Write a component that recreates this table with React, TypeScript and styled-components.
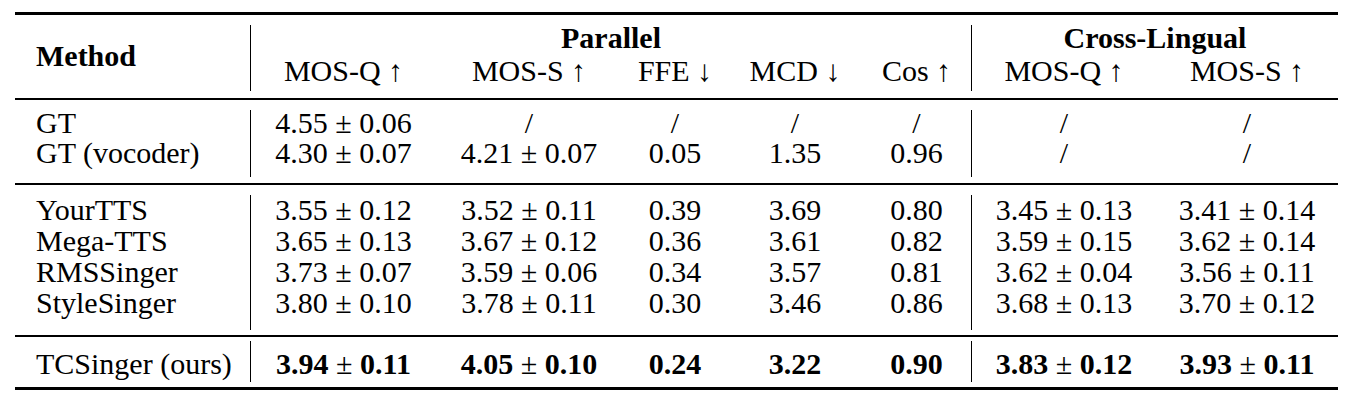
import { Fragment } from 'react'
import styled, { createGlobalStyle } from 'styled-components'

type Metric = string | { mean: string; std: string }

type ResultRow = {
  method: string
  parallel: Metric[]
  crossLingual: Metric[]
  best?: boolean
}

const columns = '235px 1px 185px 186px 106px 134px 109px 1px 184px 182px'

const GlobalStyle = createGlobalStyle`
  html, body {
    margin: 0;
    background: #ffffff;
  }
  body {
    font-family: 'Liberation Serif', 'Times New Roman', serif;
    color: #000000;
  }
`

const Page = styled.div`
  padding: 12px 0 0 15px;
`

const Table = styled.div`
  display: flex;
  flex-direction: column;
  width: 1323px;
`

const Rule = styled.div<{ $weight: number }>`
  height: ${(p) => p.$weight}px;
  background: #000000;
`

const Section = styled.div<{ $top: number; $bottom: number; $row: number; $gap?: number }>`
  display: grid;
  grid-template-columns: ${columns};
  grid-auto-rows: ${(p) => p.$row}px;
  row-gap: ${(p) => p.$gap ?? 0}px;
  padding: ${(p) => p.$top}px 0 ${(p) => p.$bottom}px;
  font-size: 30px;
  line-height: ${(p) => p.$row}px;
`

const Cell = styled.div<{ $bold?: boolean }>`
  white-space: nowrap;
  text-align: center;
  font-weight: ${(p) => (p.$bold ? 700 : 400)};
`

const MethodCell = styled(Cell)`
  text-align: left;
  padding-left: 21px;
`

const MethodHeader = styled(MethodCell)`
  grid-column: 1;
  grid-row: 1 / span 2;
  align-self: center;
  padding-top: 2px;
  font-weight: 700;
`

const GroupHeader = styled(Cell)<{ $from: number; $to: number }>`
  grid-column: ${(p) => p.$from} / ${(p) => p.$to};
  grid-row: 1;
  font-weight: 700;
`

const ColumnHeader = styled(Cell)<{ $col: number }>`
  grid-column: ${(p) => p.$col};
  grid-row: 2;
`

// vertical rule between column groups; stops short of the horizontal rules
const VRule = styled.div<{ $col: number; $rows: number; $inset: [number, number] }>`
  grid-column: ${(p) => p.$col};
  grid-row: 1 / span ${(p) => p.$rows};
  margin: ${(p) => p.$inset[0]}px 0 ${(p) => p.$inset[1]}px;
  background: #000000;
`

const Strong = styled.span`
  font-weight: 700;
`

const parallelHeads = ['MOS-Q ↑', 'MOS-S ↑', 'FFE ↓', 'MCD ↓', 'Cos ↑']
const crossHeads = ['MOS-Q ↑', 'MOS-S ↑']

const reference: ResultRow[] = [
  { method: 'GT', parallel: [{ mean: '4.55', std: '0.06' }, '/', '/', '/', '/'], crossLingual: ['/', '/'] },
  {
    method: 'GT (vocoder)',
    parallel: [{ mean: '4.30', std: '0.07' }, { mean: '4.21', std: '0.07' }, '0.05', '1.35', '0.96'],
    crossLingual: ['/', '/'],
  },
]

const baselines: ResultRow[] = [
  {
    method: 'YourTTS',
    parallel: [{ mean: '3.55', std: '0.12' }, { mean: '3.52', std: '0.11' }, '0.39', '3.69', '0.80'],
    crossLingual: [{ mean: '3.45', std: '0.13' }, { mean: '3.41', std: '0.14' }],
  },
  {
    method: 'Mega-TTS',
    parallel: [{ mean: '3.65', std: '0.13' }, { mean: '3.67', std: '0.12' }, '0.36', '3.61', '0.82'],
    crossLingual: [{ mean: '3.59', std: '0.15' }, { mean: '3.62', std: '0.14' }],
  },
  {
    method: 'RMSSinger',
    parallel: [{ mean: '3.73', std: '0.07' }, { mean: '3.59', std: '0.06' }, '0.34', '3.57', '0.81'],
    crossLingual: [{ mean: '3.62', std: '0.04' }, { mean: '3.56', std: '0.11' }],
  },
  {
    method: 'StyleSinger',
    parallel: [{ mean: '3.80', std: '0.10' }, { mean: '3.78', std: '0.11' }, '0.30', '3.46', '0.86'],
    crossLingual: [{ mean: '3.68', std: '0.13' }, { mean: '3.70', std: '0.12' }],
  },
]

const ours: ResultRow[] = [
  {
    method: 'TCSinger (ours)',
    parallel: [{ mean: '3.94', std: '0.11' }, { mean: '4.05', std: '0.10' }, '0.24', '3.22', '0.90'],
    crossLingual: [{ mean: '3.83', std: '0.12' }, { mean: '3.93', std: '0.11' }],
    best: true,
  },
]

const MetricValue = ({ value, best }: { value: Metric; best?: boolean }) => {
  if (typeof value === 'string') {
    return <Cell $bold={best && value !== '/'}>{value}</Cell>
  }
  if (best) {
    return (
      <Cell>
        <Strong>{value.mean}</Strong> ± <Strong>{value.std}</Strong>
      </Cell>
    )
  }
  return (
    <Cell>
      {value.mean} ± {value.std}
    </Cell>
  )
}

type BodyProps = {
  rows: ResultRow[]
  top: number
  bottom: number
  row: number
  inset: [number, number]
}

const Body = ({ rows, top, bottom, row, inset }: BodyProps) => (
  <Section $top={top} $bottom={bottom} $row={row}>
    <VRule $col={2} $rows={rows.length} $inset={inset} />
    <VRule $col={8} $rows={rows.length} $inset={inset} />
    {rows.map((r) => (
      <Fragment key={r.method}>
        <MethodCell>{r.method}</MethodCell>
        {r.parallel.map((v, i) => (
          <MetricValue key={`p${i}`} value={v} best={r.best} />
        ))}
        {r.crossLingual.map((v, i) => (
          <MetricValue key={`c${i}`} value={v} best={r.best} />
        ))}
      </Fragment>
    ))}
  </Section>
)

export default function App() {
  return (
    <Page>
      <GlobalStyle />
      <Table>
        <Rule $weight={3} />
        <Section $top={7} $bottom={12} $row={31} $gap={2}>
          <MethodHeader>Method</MethodHeader>
          <VRule $col={2} $rows={2} $inset={[3, -5]} />
          <GroupHeader $from={3} $to={8}>
            Parallel
          </GroupHeader>
          {parallelHeads.map((h, i) => (
            <ColumnHeader key={h} $col={3 + i}>
              {h}
            </ColumnHeader>
          ))}
          <VRule $col={8} $rows={2} $inset={[3, -5]} />
          <GroupHeader $from={9} $to={11}>
            Cross-Lingual
          </GroupHeader>
          {crossHeads.map((h, i) => (
            <ColumnHeader key={`x${h}`} $col={9 + i}>
              {h}
            </ColumnHeader>
          ))}
        </Section>
        <Rule $weight={2} />
        <Body rows={reference} top={8} bottom={15} row={30} inset={[2, -9]} />
        <Rule $weight={2} />
        <Body rows={baselines} top={9} bottom={17} row={31} inset={[1, -12]} />
        <Rule $weight={2} />
        <Body rows={ours} top={11} bottom={8} row={31} inset={[-7, -3]} />
        <Rule $weight={3} />
      </Table>
    </Page>
  )
}
